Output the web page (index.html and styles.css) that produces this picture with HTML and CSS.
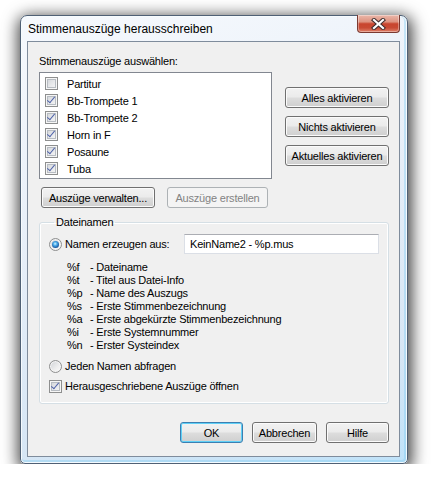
FILE: index.html
```html
<!DOCTYPE html>
<html lang="de">
<head>
    <meta charset="UTF-8">
    <title>Stimmenauszüge herausschreiben</title>
    <link rel="stylesheet" href="styles.css">
</head>
<body>

    <div class="window">

        <!-- Title bar -->
        <div class="titlebar">
            <span class="title">Stimmenauszüge herausschreiben</span>
            <button class="close-btn" title="Schließen">
                <svg width="15" height="12" viewBox="0 0 15 12">
                    <path d="M3 2 L12 10 M12 2 L3 10" stroke="#3e2c2c" stroke-width="4.2" stroke-linecap="square"/>
                    <path d="M3 2 L12 10 M12 2 L3 10" stroke="#ffffff" stroke-width="2.2" stroke-linecap="square"/>
                </svg>
            </button>
        </div>

        <!-- Dialog body -->
        <div class="client">
            <div class="caption">Stimmenauszüge auswählen:</div>

            <div class="parts-row">
                <div class="listbox">
                    <div class="list-item"><span class="cb"></span>Partitur</div>
                    <div class="list-item"><span class="cb on"></span>Bb-Trompete 1</div>
                    <div class="list-item"><span class="cb on"></span>Bb-Trompete 2</div>
                    <div class="list-item"><span class="cb on"></span>Horn in F</div>
                    <div class="list-item"><span class="cb on"></span>Posaune</div>
                    <div class="list-item"><span class="cb on"></span>Tuba</div>
                </div>
                <div class="side-buttons">
                    <button class="btn">Alles aktivieren</button>
                    <button class="btn">Nichts aktivieren</button>
                    <button class="btn">Aktuelles aktivieren</button>
                </div>
            </div>

            <div class="parts-actions">
                <button class="btn btn-manage">Auszüge verwalten...</button>
                <button class="btn btn-create" disabled>Auszüge erstellen</button>
            </div>

            <fieldset class="group">
                <legend>Dateinamen</legend>

                <div class="name-row">
                    <span class="radio on"></span>
                    <span class="name-label">Namen erzeugen aus:</span>
                    <input class="name-input" type="text" value="KeinName2 - %p.mus">
                </div>

                <div class="tokens">
                    <span>%f</span><span>- Dateiname</span>
                    <span>%t</span><span>- Titel aus Datei-Info</span>
                    <span>%p</span><span>- Name des Auszugs</span>
                    <span>%s</span><span>- Erste Stimmenbezeichnung</span>
                    <span>%a</span><span>- Erste abgekürzte Stimmenbezeichnung</span>
                    <span>%i</span><span>- Erste Systemnummer</span>
                    <span>%n</span><span>- Erster Systeindex</span>
                </div>

                <div class="option-row ask-row"><span class="radio"></span>Jeden Namen abfragen</div>
                <div class="option-row open-row"><span class="cb on"></span>Herausgeschriebene Auszüge öffnen</div>
            </fieldset>

            <div class="footer-buttons">
                <button class="btn btn-default">OK</button>
                <button class="btn btn-cancel">Abbrechen</button>
                <button class="btn">Hilfe</button>
            </div>
        </div>
    </div>

</body>
</html>
```

FILE: styles.css
```css
body {
    margin: 0;
    background-color: #ffffff;
    font-family: 'Liberation Sans', Arial, sans-serif;
    font-size: 11px;
    letter-spacing: -0.2px;
    color: #000;
}

/* Window frame */
.window {
    width: 388px;
    height: 449px;
    margin: 15px 0 0 20px;
    box-sizing: border-box;
    padding: 0 7px 6px 6px;
    border: 1px solid #4f6075;
    border-radius: 7px 7px 5px 5px;
    background: linear-gradient(165deg, #f6f9fd 0%, #e6eef8 45%, #d6e6f5 80%, #bfe2f9 100%);
    box-shadow: inset 0 0 0 1px rgba(255, 255, 255, 0.85),
                inset -1px -1px 0 2px rgba(120, 200, 240, 0.35),
                1px 4px 16px 3px rgba(0, 0, 0, 0.75);
    display: flex;
    flex-direction: column;
}

.titlebar {
    height: 25px;
    display: flex;
    justify-content: space-between;
    align-items: flex-start;
}

.title {
    font-size: 12px;
    letter-spacing: 0;
    line-height: 15px;
    padding: 6px 0 0 1px;
    color: #000;
}

.close-btn {
    width: 43px;
    height: 18px;
    margin: -1px 0 0 0;
    padding: 0;
    border: 1px solid #7a3a32;
    border-top: none;
    border-radius: 0 0 4px 4px;
    background: linear-gradient(#eab7aa 0%, #de9380 40%, #c9452e 52%, #c84a33 75%, #e0826b 100%);
    box-shadow: inset 0 0 0 1px rgba(255, 255, 255, 0.35);
    display: flex;
    align-items: center;
    justify-content: center;
}

/* Client area */
.client {
    flex-grow: 1;
    border: 1px solid #7f8c9c;
    background-color: #f0f0f0;
    padding: 13px 10px 0 11px;
}

.caption {
    line-height: 13px;
    margin-bottom: 4px;
}

.parts-row {
    display: flex;
}

.listbox {
    width: 233px;
    height: 107px;
    box-sizing: border-box;
    border: 1px solid #828790;
    background-color: #fff;
    padding: 2px 0 0 5px;
}

.list-item {
    height: 17px;
    display: flex;
    align-items: center;
}

.list-item .cb {
    margin-right: 9px;
}

.side-buttons {
    display: flex;
    flex-direction: column;
    gap: 8px;
    margin-left: 13px;
    padding-top: 15px;
}

.side-buttons .btn {
    width: 104px;
}

/* Checkboxes and radios */
.cb {
    width: 13px;
    height: 13px;
    box-sizing: border-box;
    flex-shrink: 0;
    border: 1px solid #8e8f8f;
    background: linear-gradient(135deg, #cdd0d5 0%, #e8e9eb 55%, #f9f9f9 100%);
    box-shadow: inset 0 0 0 1px #f6f6f6, inset 0 0 0 2px #b7bcc2;
    position: relative;
}

.cb.on::after {
    content: "";
    position: absolute;
    left: 2px;
    top: 0px;
    width: 3px;
    height: 7px;
    border: solid #4f62a8;
    border-width: 0 1.6px 1.6px 0;
    transform: translate(1px, 0) rotate(40deg);
}

.radio {
    width: 13px;
    height: 13px;
    box-sizing: border-box;
    flex-shrink: 0;
    border: 1px solid #8e8f8f;
    border-radius: 50%;
    background: linear-gradient(135deg, #cfd2d6 0%, #eeeeee 60%, #fbfbfb 100%);
    box-shadow: inset 0 0 0 1px #f4f4f4;
    display: flex;
    align-items: center;
    justify-content: center;
}

.radio.on::after {
    content: "";
    width: 7px;
    height: 7px;
    border-radius: 50%;
    background: radial-gradient(circle at 45% 40%, #d8f4ff 0%, #4fb0ec 30%, #1a5aa3 68%, #0f3668 100%);
}

/* Buttons */
.btn {
    height: 21px;
    padding: 0;
    white-space: nowrap;
    font-family: inherit;
    font-size: 11px;
    letter-spacing: -0.2px;
    color: #000;
    border: 1px solid #707070;
    border-radius: 3px;
    background: linear-gradient(#f2f2f2 0%, #ebebeb 48%, #dddddd 52%, #cfcfcf 100%);
    box-shadow: inset 0 0 0 1px #fbfbfb;
}

.btn:disabled {
    color: #838383;
    border-color: #adb2b5;
    background: #f4f4f4;
    box-shadow: none;
}

.btn-default {
    border-color: #3c7fb1;
    box-shadow: inset 0 0 0 1px #5fd0f7;
}

.parts-actions {
    display: flex;
    gap: 12px;
    margin: 8px 0 0 2px;
}

.btn-manage {
    width: 114px;
}

.btn-create {
    width: 101px;
}

/* Group box */
.group {
    margin: 8px 0 0 0;
    padding: 4px 9px 9px 9px;
    border: 1px solid #d5dfe5;
    border-radius: 3px;
    box-shadow: inset 0 0 0 1px #ffffff;
}

.group legend {
    padding: 0 2px;
    margin-left: 5px;
    line-height: 13px;
}

.name-row {
    display: flex;
    align-items: center;
    height: 20px;
    margin-top: 1px;
}

.name-label {
    margin-left: 3px;
}

.name-input {
    margin-left: auto;
    width: 195px;
    height: 20px;
    box-sizing: border-box;
    padding: 0 5px;
    font-family: inherit;
    font-size: 11px;
    letter-spacing: -0.2px;
    border: 1px solid #dbdfe6;
    border-top-color: #abadb3;
    background-color: #fff;
}

.tokens {
    display: grid;
    grid-template-columns: 23px auto;
    line-height: 13px;
    margin: 7px 0 0 18px;
}

.option-row {
    display: flex;
    align-items: center;
    height: 16px;
    gap: 3px;
}

.ask-row {
    margin-top: 6px;
}

.open-row {
    margin-top: 4px;
}

.footer-buttons {
    display: flex;
    justify-content: flex-end;
    gap: 9px;
    margin-top: 18px;
}

.footer-buttons .btn {
    width: 63px;
}

.footer-buttons .btn-cancel {
    width: 65px;
}
```
